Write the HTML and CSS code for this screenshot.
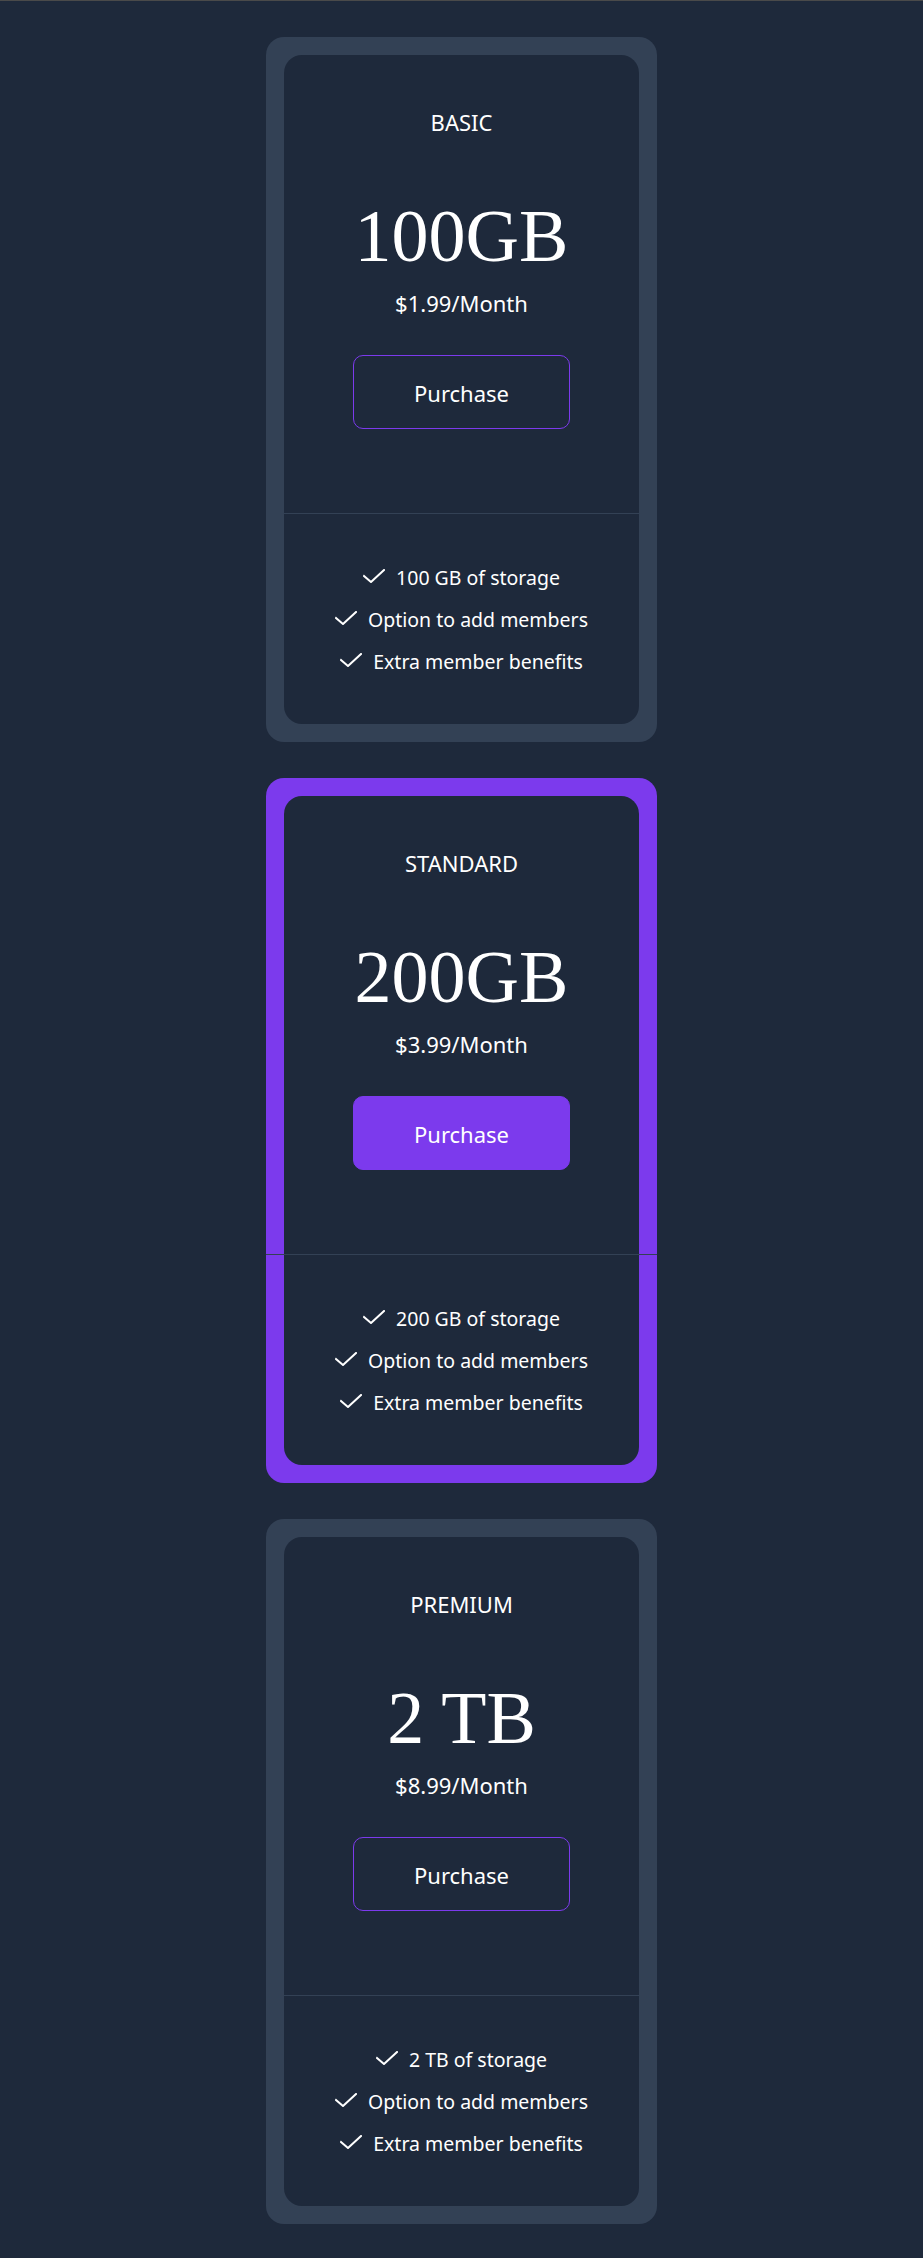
FILE: index.html
```html
<!DOCTYPE html>
<html lang="en">
<head>
<meta charset="utf-8">
<title>Pricing</title>
<link rel="stylesheet" href="styles.css">
</head>
<body>
<main class="plans">
  <section class="plan">
    <div class="plan-inner">
      <div class="plan-top">
        <h2 class="plan-name">BASIC</h2>
        <p class="plan-size">100GB</p>
        <p class="plan-price">$1.99/Month</p>
        <button class="btn">Purchase</button>
      </div>
      <div class="divider"></div>
      <ul class="features">
        <li><svg class="check" viewBox="0 0 22 14"><polyline points="1,7 8,13 21,1"/></svg><span>100 GB of storage</span></li>
        <li><svg class="check" viewBox="0 0 22 14"><polyline points="1,7 8,13 21,1"/></svg><span>Option to add members</span></li>
        <li><svg class="check" viewBox="0 0 22 14"><polyline points="1,7 8,13 21,1"/></svg><span>Extra member benefits</span></li>
      </ul>
    </div>
  </section>

  <section class="plan plan-featured">
    <div class="plan-inner">
      <div class="plan-top">
        <h2 class="plan-name">STANDARD</h2>
        <p class="plan-size">200GB</p>
        <p class="plan-price">$3.99/Month</p>
        <button class="btn btn-filled">Purchase</button>
      </div>
      <div class="divider"></div>
      <ul class="features">
        <li><svg class="check" viewBox="0 0 22 14"><polyline points="1,7 8,13 21,1"/></svg><span>200 GB of storage</span></li>
        <li><svg class="check" viewBox="0 0 22 14"><polyline points="1,7 8,13 21,1"/></svg><span>Option to add members</span></li>
        <li><svg class="check" viewBox="0 0 22 14"><polyline points="1,7 8,13 21,1"/></svg><span>Extra member benefits</span></li>
      </ul>
    </div>
  </section>

  <section class="plan">
    <div class="plan-inner">
      <div class="plan-top">
        <h2 class="plan-name">PREMIUM</h2>
        <p class="plan-size">2 TB</p>
        <p class="plan-price">$8.99/Month</p>
        <button class="btn">Purchase</button>
      </div>
      <div class="divider"></div>
      <ul class="features">
        <li><svg class="check" viewBox="0 0 22 14"><polyline points="1,7 8,13 21,1"/></svg><span>2 TB of storage</span></li>
        <li><svg class="check" viewBox="0 0 22 14"><polyline points="1,7 8,13 21,1"/></svg><span>Option to add members</span></li>
        <li><svg class="check" viewBox="0 0 22 14"><polyline points="1,7 8,13 21,1"/></svg><span>Extra member benefits</span></li>
      </ul>
    </div>
  </section>
</main>
</body>
</html>
```

FILE: styles.css
```css
* {
  box-sizing: border-box;
}

html, body {
  margin: 0;
  padding: 0;
}

body {
  background: #1e293b;
  border-top: 1px solid #4a4a4a;
  color: #ffffff;
  font-family: "Noto Sans", "Open Sans", sans-serif;
}

.plans {
  display: flex;
  flex-direction: column;
  align-items: center;
  gap: 36px;
  padding: 36px 0 34px;
}

.plan {
  width: 391px;
  padding: 18px;
  background: #334155;
  border-radius: 18px;
}

.plan-featured {
  background: #7c3aed;
}

.plan-inner {
  background: #1e293b;
  border-radius: 18px;
}

.plan-top {
  display: flex;
  flex-direction: column;
  align-items: center;
  padding: 52px 0 84px;
}

.plan-name {
  margin: 0;
  font-size: 22px;
  font-weight: 400;
  line-height: 30px;
}

.plan-size {
  margin: 59px 0 0;
  font-family: "Liberation Serif", "Times New Roman", serif;
  font-variant-numeric: oldstyle-nums;
  font-size: 74px;
  font-weight: 400;
  line-height: 80px;
}

.plan-price {
  margin: 12px 0 0;
  font-size: 22px;
  line-height: 30px;
}

.btn {
  margin-top: 37px;
  width: 217px;
  height: 74px;
  padding: 2px 0 0;
  background: transparent;
  border: 1px solid #7c3aed;
  border-radius: 10px;
  color: #ffffff;
  font-family: inherit;
  font-size: 22px;
  line-height: 30px;
}

.btn-filled {
  background: #7c3aed;
}

.divider {
  height: 1px;
  margin: 0 -18px;
  background: #334155;
}

.features {
  list-style: none;
  margin: 0;
  padding: 43px 0 41px;
}

.features li {
  display: flex;
  justify-content: center;
  align-items: center;
  gap: 11px;
  height: 42px;
  font-size: 19.5px;
  line-height: 42px;
}

.check {
  width: 22px;
  height: 14px;
  margin-bottom: 5px;
  fill: none;
  stroke: #ffffff;
  stroke-width: 2;
  stroke-linecap: square;
}
```
